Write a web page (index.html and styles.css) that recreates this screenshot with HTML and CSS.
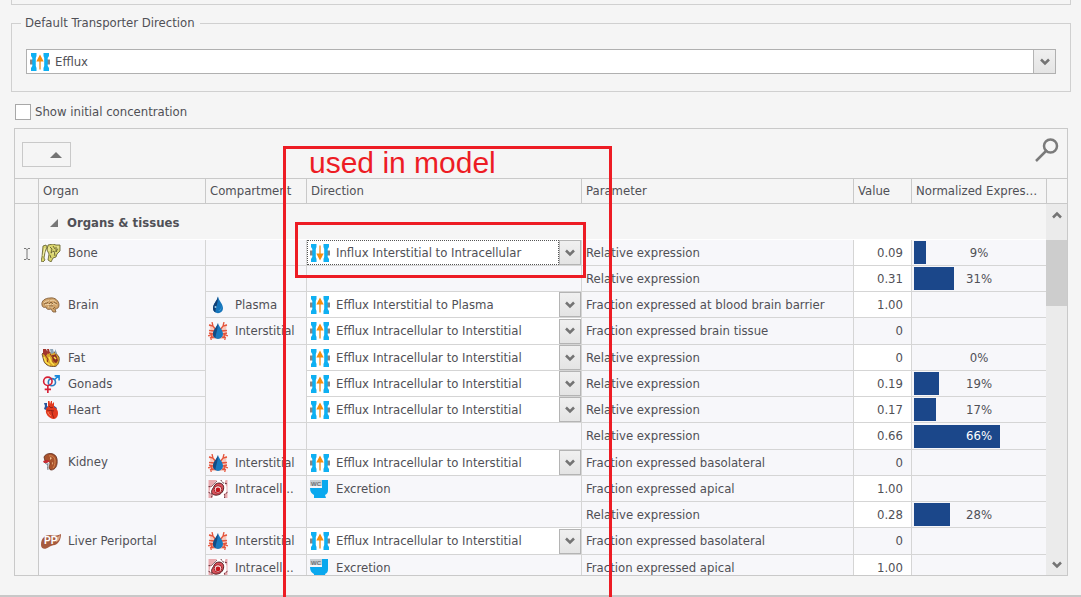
FILE: index.html
```html
<!DOCTYPE html>
<html lang="en">
<head>
<meta charset="utf-8">
<title>Transporter expression</title>
<link rel="stylesheet" href="styles.css">
</head>
<body>
<svg class="sprite" aria-hidden="true">
  <symbol id="gate" viewBox="0 0 20 18">
    <path fill="#858585" d="M0 6.500h3v5H0zM17 6.500h3v5h-3z"/>
    <path fill="#0fb0f2" d="M1 0h5.500v3l-.7 2v8l.7 2v3H1v-3l1.300-2V5L1 3zM19 0h-5.500v3l.7 2v8l-.7 2v3H19v-3l-1.300-2V5L19 3z"/>
  </symbol>
  <symbol id="efflux" viewBox="0 0 20 18">
    <use href="#gate"/>
    <path fill="#f3b56b" d="M9 7h2v9.500H9z"/><path fill="#f78c0c" d="M10 1.500l3.700 7H6.300z"/>
  </symbol>
  <symbol id="influx" viewBox="0 0 20 18">
    <use href="#gate"/>
    <path fill="#f3b56b" d="M9 1.500h2V11H9z"/><path fill="#f78c0c" d="M10 16.500l3.700-7H6.300z"/>
  </symbol>
  <symbol id="drop" viewBox="0 0 20 18">
    <path fill="#1675bb" d="M10 .5C9 5 5 8 5 12.300a5 5 0 0 0 10 0C15 8 11 5 10 .5z"/>
    <path fill="#123f74" d="M10 .5C9 5 5 8 5 12.300c0 2 1 3.500 2.500 4.300C7 12 10 9 10 .5z"/>
    <path fill="#46a9e0" d="M12.500 9c1.500 3 0 5-2.500 6 3 .3 4.500-3 2.500-6z"/>
    <circle cx="7.500" cy="11" r="1" fill="#9ccbe8"/>
  </symbol>
  <symbol id="interstitial" viewBox="0 0 20 18">
    <path fill="#f7b3a2" d="M1 2l4 1 3 4 2 2 2-2 3-4 4-1-1 6 1 6-4 3H5l-4-2 2-6z" opacity=".7"/>
    <g fill="none" stroke="#e4553c" stroke-width="1.300">
      <path d="M1 3l4 1 3 4M4 0l1 4M1 8.500l6 .5M0 14l5-2 3-1M3 18l1-5M1 11l4 1M19 3l-4 1-3 4M16 0l-1 4M19 8.500l-6 .5M20 14l-5-2-3-1M17 18l-1-5M19 11l-4 1M2 16l4-1M18 16l-4-1"/>
    </g>
    <path fill="#1779be" d="M10 1C9 5 5 8 5 12a5 5 0 0 0 10 0C15 8 11 5 10 1z"/>
    <path fill="#154b82" d="M10 1C9 5 5 8 5 12c0 2 1 3.500 2.500 4.300C7.500 12 10 8 10 1z"/>
  </symbol>
  <symbol id="intracell" viewBox="0 0 20 19">
    <path fill="#e9a9ae" d="M0 0h20v19H0z"/>
    <path fill="#fff" d="M9 0h9l-1 3 2 4v6l-3 2 1 4H4l1-3-4-3 1-5z"/>
    <path fill="none" stroke="#5b2630" stroke-dasharray="2 1" d="M0 7h3l6-6M13 0l2 3 5 1M20 13l-3 2v4M0 13l4 2-1 4"/>
    <path fill="#d8525a" stroke="#4a161b" d="M8 4c4-2 8 0 8 4 0 5-4 8-8 8s-6-3-4-6 2-5 4-6z"/>
    <ellipse cx="10" cy="10" rx="4" ry="4" fill="#fbe6e6" stroke="#a01820"/>
    <ellipse cx="10" cy="10.500" rx="2.500" ry="2.500" fill="#c4141c"/>
  </symbol>
  <symbol id="bone" viewBox="0 0 20 18">
    <path fill="#d9d46e" stroke="#5d5a2a" stroke-width=".8" d="M2 2l3-1 1 2-2 5-1 6 1 2-2 2-2-1 1-4zM7 1l5-1 3 1h4v6l-3 3-1 3-3 1-2 4-3-2 1-6-2-4z"/>
    <path fill="none" stroke="#55522b" stroke-width=".8" d="M9 3l2 2-1 4 3-2 1 5M15 3v5l2-4M12 2l2 3M9 11l1 3"/>
    <path fill="none" stroke="#f4f1b0" d="M8 3v4M12 8v2M17 2v3M4 4L2 12"/>
  </symbol>
  <symbol id="brain" viewBox="0 0 20 18">
    <path fill="#cfa269" stroke="#7a5632" stroke-width=".8" d="M1 9C0 5 4 2 9 2c5-1 9 3 9 7 0 3-2 4-4 4l1 3-3 0-2-3c-3 1-5 0-5-2-2 1-4 0-4-2z"/>
    <path fill="none" stroke="#f1d8ae" d="M3 7c2-3 4-1 5-3M4 9c2-2 4 1 6-1M9 5c3-2 5 0 6 1M11 9c2-3 4 0 5 0M7 11c2-1 3 0 5 0"/>
    <path fill="none" stroke="#6a4a2b" stroke-width=".7" d="M3 8c2-1 3 0 4-2M8 8l2-2 2 2M13 6l3 2M8 10h4M12 13l2-2"/>
  </symbol>
  <symbol id="fat" viewBox="0 0 20 18">
    <path fill="#d8a42a" stroke="#5b3920" stroke-width=".8" d="M1 5l3-3 6 2 4-1 4 5c1 4-1 9-4 9.500-5 .5-9-1-11-5z"/>
    <path fill="#8fa4b5" d="M9 0h3l1 4-3 1zM14 0l2 4-2 1z"/>
    <path fill="#a2352d" d="M2 0h3l2 4-2 3-3-2zM6 0h2l1 4-2 1z"/>
    <path fill="#8d2f20" d="M11 6l4 0 2 6-3 2-2-3z"/>
    <path fill="none" stroke="#8d2f20" d="M4 6l3 4-1 4M9 5l3 4v6M14 5l2 5-1 4"/>
    <path fill="none" stroke="#ffe14d" stroke-width="1.500" d="M3 8l2 5 4 3M8 8l2 5 3 3M13 8l2 2"/>
  </symbol>
  <symbol id="gonads" viewBox="0 0 20 20">
    <g fill="none" stroke-width="1.800">
      <circle cx="11" cy="8" r="4" stroke="#2a7cc4"/><path stroke="#1788dc" d="M14 5l4.500-4M14 1h5v5"/>
      <circle cx="6.500" cy="7" r="4.700" stroke="#d61f35"/><path stroke="#d61f35" d="M6.500 12v8M3 16h7"/>
    </g>
  </symbol>
  <symbol id="heart" viewBox="0 0 20 18">
    <path fill="#28559b" d="M3 2l3 0v3l3 2-1 4-3-2-2-1 1-3zM12 4l4 3-1 2-4-1z"/>
    <path fill="#e23a20" d="M7 0h1.500l.5 3 1-3h1v3l2-2v5c3 1 4 4 4 6 0 4-2 6-5 6-4-1-8-5-7-9 0-2 1-3 2-3z"/>
    <path fill="none" stroke="#7d1b15" stroke-width=".8" d="M6 9c2 1 5 0 7 1M11 10c0 3 1 5 2 7M8 5c1 2 3 2 4 1"/>
    <path fill="none" stroke="#f58a63" d="M7 11c0 2 2 3 3 4"/>
  </symbol>
  <symbol id="kidney" viewBox="0 0 20 18">
    <path fill="#a9532d" stroke="#5e2b1b" stroke-width=".8" d="M3 4C5-1 15-1 16 6c1 7-2 11-6 11-3-1-2-4-1-6 0-3-2-3-5-3z"/>
    <path fill="none" stroke="#d68a55" d="M8 3c4-1 6 2 6 5 0 4-1 6-2 7"/>
    <path fill="#c92a32" d="M2 8l4-1 3 1-3 2-3 0z"/><path fill="none" stroke="#77828b" d="M7 10c0 3-1 4 0 7M4 10l3 2"/>
    <path fill="#f1c28f" d="M9 4l2 1-2 2zM11 9l1 1-1 2z"/>
  </symbol>
  <symbol id="chevron" viewBox="0 0 10 8"><path fill="none" stroke="#747474" stroke-width="2.500" d="M1 1.500l4 4 4-4"/></symbol>
</svg>

<div class="page">
  <div class="previous-group"></div>

  <fieldset class="group">
    <legend>Default Transporter Direction</legend>
    <div class="combo framed">
      <select aria-label="Default transporter direction"><option>Efflux</option><option>Influx</option></select>
      <svg class="icon"><use href="#efflux"/></svg>
      <span class="drop"><svg><use href="#chevron"/></svg></span>
    </div>
  </fieldset>

  <label class="check"><input type="checkbox">Show initial concentration</label>

  <main class="panel">
    <div class="toolbar">
      <button class="sort" type="button" aria-label="Sort group"><svg viewBox="0 0 12 6"><path fill="#747474" d="M6 0l6 6H0z"/></svg></button>
      <button class="search" type="button" aria-label="Search"><svg viewBox="0 0 24 24"><path fill="none" stroke="#7b7b7b" stroke-width="2.500" d="M1 23l11-11"/><circle cx="15.500" cy="8" r="6.500" fill="none" stroke="#7b7b7b" stroke-width="2.500"/></svg></button>
    </div>

    <div class="grid">
      <table>
        <colgroup><col class="c-mark"><col class="c-organ"><col class="c-comp"><col class="c-dir"><col><col class="c-value"><col class="c-norm"></colgroup>
        <thead>
          <tr><th></th><th>Organ</th><th>Compartment</th><th>Direction</th><th>Parameter</th><th>Value</th><th>Normalized Expres…</th></tr>
        </thead>
        <tbody class="group-head">
          <tr><td class="mark"></td><th colspan="6"><svg viewBox="0 0 8 8"><path fill="#777" d="M8 0v8H0z"/></svg>Organs &amp; tissues</th></tr>
        </tbody>
        <tbody class="rows">
          <tr>
            <td class="mark"><svg viewBox="0 0 8 14"><path fill="none" stroke="#777" d="M1 1.500h2l1 1 1-1h2M4 2v10M1 12.500h2l1-1 1 1h2"/></svg></td>
            <td><span class="item"><svg class="icon"><use href="#bone"/></svg>Bone</span></td><td></td>
            <td class="edit"><div class="combo focused"><select aria-label="Bone direction"><option>Influx Interstitial to Intracellular</option></select><svg class="icon"><use href="#influx"/></svg><span class="drop"><svg><use href="#chevron"/></svg></span></div></td>
            <td>Relative expression</td><td class="num edit">0.09</td><td class="norm"><div class="meter"><i style="width:9%"></i><span>9%</span></div></td>
          </tr>
          <tr>
            <td class="mark" rowspan="12"></td>
            <td rowspan="3"><span class="item"><svg class="icon"><use href="#brain"/></svg>Brain</span></td><td></td><td></td>
            <td>Relative expression</td><td class="num edit">0.31</td><td class="norm"><div class="meter"><i style="width:31%"></i><span>31%</span></div></td>
          </tr>
          <tr>
            <td><span class="item"><svg class="icon"><use href="#drop"/></svg>Plasma</span></td>
            <td class="edit"><div class="combo"><select aria-label="Brain plasma direction"><option>Efflux Interstitial to Plasma</option></select><svg class="icon"><use href="#efflux"/></svg><span class="drop"><svg><use href="#chevron"/></svg></span></div></td>
            <td>Fraction expressed at blood brain barrier</td><td class="num edit">1.00</td><td class="norm"></td>
          </tr>
          <tr>
            <td><span class="item"><svg class="icon"><use href="#interstitial"/></svg>Interstitial</span></td>
            <td class="edit"><div class="combo"><select aria-label="Brain interstitial direction"><option>Efflux Intracellular to Interstitial</option></select><svg class="icon"><use href="#efflux"/></svg><span class="drop"><svg><use href="#chevron"/></svg></span></div></td>
            <td>Fraction expressed brain tissue</td><td class="num">0</td><td class="norm"></td>
          </tr>
          <tr>
            <td><span class="item"><svg class="icon"><use href="#fat"/></svg>Fat</span></td><td rowspan="3"></td>
            <td class="edit"><div class="combo"><select aria-label="Fat direction"><option>Efflux Intracellular to Interstitial</option></select><svg class="icon"><use href="#efflux"/></svg><span class="drop"><svg><use href="#chevron"/></svg></span></div></td>
            <td>Relative expression</td><td class="num edit">0</td><td class="norm"><div class="meter"><i style="width:0%"></i><span>0%</span></div></td>
          </tr>
          <tr>
            <td><span class="item"><svg class="icon"><use href="#gonads"/></svg>Gonads</span></td>
            <td class="edit"><div class="combo"><select aria-label="Gonads direction"><option>Efflux Intracellular to Interstitial</option></select><svg class="icon"><use href="#efflux"/></svg><span class="drop"><svg><use href="#chevron"/></svg></span></div></td>
            <td>Relative expression</td><td class="num edit">0.19</td><td class="norm"><div class="meter"><i style="width:19%"></i><span>19%</span></div></td>
          </tr>
          <tr>
            <td><span class="item"><svg class="icon"><use href="#heart"/></svg>Heart</span></td>
            <td class="edit"><div class="combo"><select aria-label="Heart direction"><option>Efflux Intracellular to Interstitial</option></select><svg class="icon"><use href="#efflux"/></svg><span class="drop"><svg><use href="#chevron"/></svg></span></div></td>
            <td>Relative expression</td><td class="num edit">0.17</td><td class="norm"><div class="meter"><i style="width:17%"></i><span>17%</span></div></td>
          </tr>
          <tr>
            <td rowspan="3"><span class="item"><svg class="icon"><use href="#kidney"/></svg>Kidney</span></td><td></td><td></td>
            <td>Relative expression</td><td class="num edit">0.66</td><td class="norm"><div class="meter over"><i style="width:66%"></i><span>66%</span></div></td>
          </tr>
          <tr>
            <td><span class="item"><svg class="icon"><use href="#interstitial"/></svg>Interstitial</span></td>
            <td class="edit"><div class="combo"><select aria-label="Kidney interstitial direction"><option>Efflux Intracellular to Interstitial</option></select><svg class="icon"><use href="#efflux"/></svg><span class="drop"><svg><use href="#chevron"/></svg></span></div></td>
            <td>Fraction expressed basolateral</td><td class="num">0</td><td class="norm"></td>
          </tr>
          <tr>
            <td><span class="item"><svg class="icon"><use href="#intracell"/></svg>Intracell...</span></td>
            <td><span class="item"><svg class="icon" viewBox="0 0 20 18"><path fill="#0aa8ee" d="M13 0h6v10c0 3-1 4-3 5l1 3H5v-3C3 14 1 12 1 8h12z"/><path fill="#c9ced2" d="M1 0h12v6H1z"/><text class="wc" x="2" y="6">WC</text></svg>Excretion</span></td>
            <td>Fraction expressed apical</td><td class="num edit">1.00</td><td class="norm"></td>
          </tr>
          <tr>
            <td rowspan="3"><span class="item"><svg class="icon" viewBox="0 0 20 18"><path fill="#a65a3e" d="M0 13C0 6 4 3 9 3c4 1 7 1 11-1 0 5-2 9-6 11-3 0-4 1-6 2-4 3-8 2-8-2z"/><path fill="#d9a98e" d="M15 5c2 0 3-1 4-2 0 3-1 6-4 7z"/><text class="pp" x="3" y="12">PP</text></svg>Liver Periportal</span></td><td></td><td></td>
            <td>Relative expression</td><td class="num edit">0.28</td><td class="norm"><div class="meter"><i style="width:28%"></i><span>28%</span></div></td>
          </tr>
          <tr>
            <td><span class="item"><svg class="icon"><use href="#interstitial"/></svg>Interstitial</span></td>
            <td class="edit"><div class="combo"><select aria-label="Liver interstitial direction"><option>Efflux Intracellular to Interstitial</option></select><svg class="icon"><use href="#efflux"/></svg><span class="drop"><svg><use href="#chevron"/></svg></span></div></td>
            <td>Fraction expressed basolateral</td><td class="num">0</td><td class="norm"></td>
          </tr>
          <tr>
            <td><span class="item"><svg class="icon"><use href="#intracell"/></svg>Intracell...</span></td>
            <td><span class="item"><svg class="icon" viewBox="0 0 20 18"><path fill="#0aa8ee" d="M13 0h6v10c0 3-1 4-3 5l1 3H5v-3C3 14 1 12 1 8h12z"/><path fill="#c9ced2" d="M1 0h12v6H1z"/><text class="wc" x="2" y="6">WC</text></svg>Excretion</span></td>
            <td>Fraction expressed apical</td><td class="num edit">1.00</td><td class="norm"></td>
          </tr>
        </tbody>
      </table>
      <div class="side">
        <div class="side-head"></div>
        <div class="scrollbar">
          <svg class="up"><use href="#chevron"/></svg>
          <div class="thumb"></div>
          <svg class="down"><use href="#chevron"/></svg>
        </div>
      </div>
    </div>
  </main>

  <div class="window-edge"></div>

  <div class="note-box"><span>used in model</span></div>
  <div class="note-cell"></div>
</div>
</body>
</html>
```

FILE: styles.css
```css
* { box-sizing: border-box; }

body {
  margin: 0;
  background: #f5f5f5;
  color: #505056;
  font: 13px/18px "DejaVu Sans Condensed", "DejaVu Sans", sans-serif;
  font-stretch: condensed;
}

.sprite { position: absolute; width: 0; height: 0; }

.page {
  position: relative;
  display: flex;
  flex-direction: column;
  height: 100vh;
  overflow: hidden;
}
.window-edge { flex: none; height: 2px; background: #c8c8c8; }

.previous-group {
  flex: none;
  height: 5px;
  margin: 0 10px 0 11px;
  border: solid #d0d0d0;
  border-width: 0 1px 1px;
}

.group {
  min-width: 0;
  margin: 9px 10px 0 11px;
  padding: 17px 14px;
  border: 1px solid #d0d0d0;
}
.group legend { margin-left: -5px; padding: 0 5px 0 4px; }

.icon { width: 20px; height: 18px; flex: none; }
.wc { font: 700 6px "Liberation Sans", sans-serif; fill: #6f7478; }
.pp { font: 700 10px "Liberation Sans", sans-serif; fill: #fff; }

select {
  appearance: none;
  width: 100%;
  min-width: 0;
  margin: 0;
  border: 0;
  border-radius: 0;
  background: #fff;
  color: inherit;
  font: inherit;
  outline: 0;
}

/* The list box fills the whole cell; icon and drop button are stacked over it. */
.combo {
  display: grid;
  grid-template-columns: 28px 1fr 22px;
  align-items: center;
  height: 25px;
}
.combo select { grid-area: 1 / 1 / 2 / 4; height: 100%; padding: 0 22px 0 29px; }
.combo .icon { grid-area: 1 / 1; margin-left: 3px; pointer-events: none; }
.combo .drop {
  grid-area: 1 / 3;
  display: grid;
  place-items: center;
  height: 100%;
  border: 1px solid #b4b4b4;
  background: linear-gradient(#f0f0f0, #e4e4e4);
  pointer-events: none;
}
.drop svg { width: 10px; height: 8px; }
.combo.framed { border: 1px solid #b0b0b0; }
.combo.framed .drop { border-width: 0 0 0 1px; }
.framed select { padding-left: 28px; }
.focused select { border: 1px dotted #555; padding-left: 28px; width: calc(100% - 22px); }

.check {
  display: flex;
  align-items: center;
  gap: 4px;
  margin: 11px 15px 8px;
  height: 17px;
}
.check input {
  appearance: none;
  width: 16px;
  height: 16px;
  margin: 0;
  border: 1px solid #a8a8a8;
  background: #fff;
}

.panel {
  flex: 1;
  display: flex;
  flex-direction: column;
  min-height: 0;
  margin: 0 13px 19px 14px;
  border: 1px solid #c9c9c9;
}

.toolbar {
  flex: none;
  display: flex;
  justify-content: space-between;
  align-items: flex-start;
  height: 49px;
  padding: 9px 8px 0 7px;
}
.toolbar button { border: 0; padding: 0; background: none; }
.toolbar .sort {
  display: flex;
  justify-content: flex-end;
  align-items: center;
  width: 49px;
  height: 25px;
  margin-top: 4px;
  padding-right: 8px;
  border: 1px solid #c9c9c9;
}
.sort svg { width: 12px; height: 6px; }
.search svg { display: block; width: 24px; height: 24px; }

.grid { flex: 1; display: flex; min-height: 0; overflow: hidden; }

table {
  flex: 1;
  align-self: flex-start;
  width: 0;
  table-layout: fixed;
  border-collapse: separate;
  border-spacing: 0;
}
.c-mark { width: 24px; }
.c-organ { width: 167px; }
.c-comp { width: 101px; }
.c-dir { width: 275px; }
.c-value { width: 58px; }
.c-norm { width: 134px; }

th, td { text-align: left; white-space: nowrap; overflow: hidden; }
thead th {
  height: 26px;
  padding: 0 4px;
  border: solid #c9c9c9;
  border-width: 1px 1px 1px 0;
  font-weight: 400;
}
thead th:last-child { border-right: 0; }

.group-head th { height: 36px; padding: 2px 0 0 11px; border-bottom: 1px solid #fff; }
.group-head svg { width: 8px; height: 8px; margin-right: 9px; }

.rows td {
  height: 26px;
  padding: 0 4px;
  border: solid #d5d5d5;
  border-width: 0 1px 1px 0;
  background: #f7f7fa;
}
.rows tr:nth-child(4n) td { height: 27px; }
.rows td:has(.item) { padding: 0 2px; }
.rows td:has(.combo) { padding: 0; }
.rows td.edit { background: #fff; }
.rows td.num { padding-right: 8px; text-align: right; }
.rows td.norm { padding: 0 2px; border-right: 0; }
.rows td.mark, td.mark {
  padding: 0;
  border: solid #c9c9c9;
  border-width: 0 1px 0 0;
  background: #f5f5f5;
  text-align: center;
}
.mark svg { width: 8px; height: 14px; vertical-align: middle; }

.item { display: flex; align-items: center; gap: 7px; }

.meter { display: grid; height: 23px; align-items: center; }
.meter i { grid-area: 1 / 1; height: 100%; background: #1b478a; }
.meter span { grid-area: 1 / 1; text-align: center; }
.meter.over span { color: #fff; }

.side { flex: none; display: flex; flex-direction: column; width: 21px; }
.side-head { flex: none; height: 26px; border: solid #c9c9c9; border-width: 1px 0 1px 1px; }
.scrollbar {
  flex: 1;
  display: flex;
  flex-direction: column;
  align-items: center;
  padding: 7px 0 6px;
  background: #ebebeb;
}
.scrollbar svg { width: 10px; height: 8px; }
.scrollbar .up { transform: rotate(180deg); }
.scrollbar .down { margin-top: auto; }
.thumb { width: 100%; height: 66px; margin-top: 21px; background: #cdcdcd; }

/* Annotation marks drawn over the window. */
.note-box, .note-cell { position: absolute; border: 3px solid #ed1c24; pointer-events: none; }
.note-box {
  top: 146px;
  left: 283px;
  width: 329px;
  bottom: 0;
  border-bottom: 0;
  padding: 0 23px;
  color: #ed1c24;
  font: 30px/28px "Liberation Sans", Arial, sans-serif;
}
.note-cell { top: 222px; left: 295px; width: 291px; height: 56px; }
```
